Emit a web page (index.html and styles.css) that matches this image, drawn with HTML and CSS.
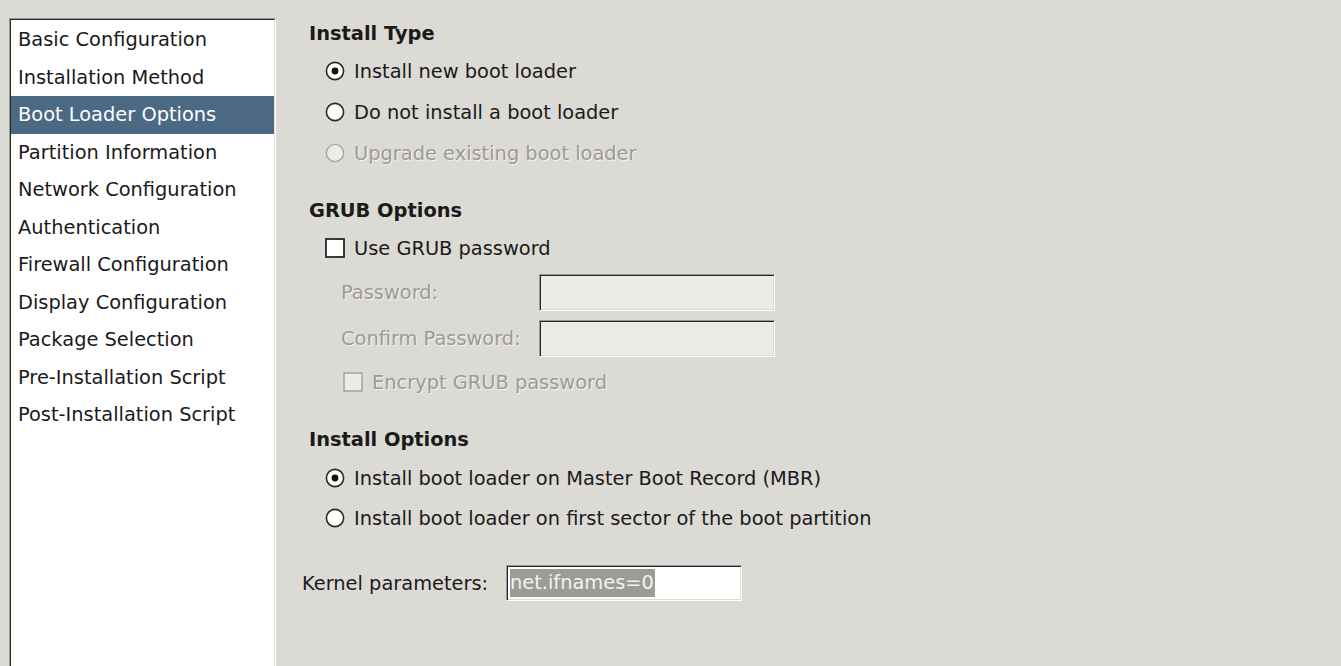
FILE: index.html
```html
<!DOCTYPE html>
<html>
<head>
<meta charset="utf-8">
<link rel="stylesheet" href="styles.css">
</head>
<body>
<div class="window">
  <div class="sidebar">
    <div class="sidebar-inner">
      <div class="item">Basic Configuration</div>
      <div class="item">Installation Method</div>
      <div class="item selected">Boot Loader Options</div>
      <div class="item">Partition Information</div>
      <div class="item">Network Configuration</div>
      <div class="item">Authentication</div>
      <div class="item">Firewall Configuration</div>
      <div class="item">Display Configuration</div>
      <div class="item">Package Selection</div>
      <div class="item">Pre-Installation Script</div>
      <div class="item">Post-Installation Script</div>
    </div>
  </div>

  <div class="main">
    <div class="heading">Install Type</div>
    <div class="row opt first">
      <svg class="radio" width="20" height="20" viewBox="0 0 20 20"><circle cx="10" cy="10" r="8.6" fill="#fff" stroke="#2a2a2a" stroke-width="1.6"/><circle cx="10" cy="10" r="3.4" fill="#111"/></svg>
      <span>Install new boot loader</span>
    </div>
    <div class="row opt">
      <svg class="radio" width="20" height="20" viewBox="0 0 20 20"><circle cx="10" cy="10" r="8.6" fill="#fff" stroke="#2a2a2a" stroke-width="1.6"/></svg>
      <span>Do not install a boot loader</span>
    </div>
    <div class="row opt disabled">
      <svg class="radio" width="20" height="20" viewBox="0 0 20 20"><circle cx="10" cy="10" r="8.6" fill="#edebe6" stroke="#a8a6a1" stroke-width="1.4"/></svg>
      <span>Upgrade existing boot loader</span>
    </div>

    <div class="heading section">GRUB Options</div>
    <div class="row opt first">
      <svg class="check" width="20" height="20" viewBox="0 0 20 20"><rect x="1" y="1" width="18" height="18" fill="#fff" stroke="#262626" stroke-width="1.8"/></svg>
      <span>Use GRUB password</span>
    </div>
    <div class="row field pw-first">
      <span class="field-label disabled">Password:</span>
      <div class="entry entry-disabled"></div>
    </div>
    <div class="row field pw-second">
      <span class="field-label disabled">Confirm Password:</span>
      <div class="entry entry-disabled"></div>
    </div>
    <div class="row opt encrypt disabled">
      <svg class="check" width="20" height="20" viewBox="0 0 20 20"><rect x="1" y="1" width="18" height="18" fill="#edebe6" stroke="#a19f9a" stroke-width="1.4"/></svg>
      <span>Encrypt GRUB password</span>
    </div>

    <div class="heading section">Install Options</div>
    <div class="row opt first mbr">
      <svg class="radio" width="20" height="20" viewBox="0 0 20 20"><circle cx="10" cy="10" r="8.6" fill="#fff" stroke="#2a2a2a" stroke-width="1.6"/><circle cx="10" cy="10" r="3.4" fill="#111"/></svg>
      <span>Install boot loader on Master Boot Record (MBR)</span>
    </div>
    <div class="row opt sector">
      <svg class="radio" width="20" height="20" viewBox="0 0 20 20"><circle cx="10" cy="10" r="8.6" fill="#fff" stroke="#2a2a2a" stroke-width="1.6"/></svg>
      <span>Install boot loader on first sector of the boot partition</span>
    </div>

    <div class="row kernel">
      <span class="kernel-label">Kernel parameters:</span>
      <div class="entry entry-white"><span class="sel">net.ifnames=0</span></div>
    </div>
  </div>
</div>
</body>
</html>
```

FILE: styles.css
```css
html, body {
  margin: 0;
  padding: 0;
}
body {
  background: #dcdad5;
  font-family: "DejaVu Sans", "Liberation Sans", sans-serif;
  font-size: 19.4px;
  color: #1a1a1a;
  height: 666px;
  overflow: hidden;
}
.window {
  display: flex;
  align-items: flex-start;
}
.sidebar {
  margin-left: 9px;
  margin-top: 18px;
  width: 265px;
  height: 647px;
  border: 1px solid;
  border-bottom: none;
  border-color: #9a9893 #ffffff #ffffff #9a9893;
}
.sidebar-inner {
  height: 100%;
  box-sizing: border-box;
  background: #ffffff;
  border: 1px solid;
  border-bottom: none;
  border-color: #2b2b2b #e4e2de #e4e2de #2b2b2b;
  padding-top: 1px;
}
.item {
  height: 37.5px;
  line-height: 37.5px;
  padding-left: 7px;
  white-space: nowrap;
}
.item.selected {
  background: #4b6983;
  color: #ffffff;
}
.main {
  padding-left: 26px;
  padding-top: 22px;
  display: flex;
  flex-direction: column;
}
.heading {
  font-weight: bold;
  height: 24px;
  line-height: 24px;
  margin-left: 7px;
}
.heading.section {
  margin-top: 34px;
}
.row {
  display: flex;
  align-items: center;
  white-space: nowrap;
}
.opt {
  height: 24px;
  margin-left: 23px;
  margin-top: 17px;
  gap: 9px;
}
.opt.first {
  margin-top: 13px;
}
.opt.mbr {
  margin-top: 14px;
}
.opt.sector {
  margin-top: 16px;
}
.radio, .check {
  flex: none;
}
.disabled {
  color: #9c9a95;
  text-shadow: 1px 1px 0 #f4f3f0;
}
.field {
  height: 37px;
  margin-left: 39px;
}
.field.pw-first {
  margin-top: 14px;
}
.field.pw-second {
  margin-top: 9px;
}
.field-label {
  width: 198px;
  flex: none;
}
.entry {
  box-sizing: border-box;
  width: 236px;
  height: 37px;
  border: 1px solid;
  border-color: #9a9893 #ffffff #ffffff #9a9893;
  box-shadow: inset 1px 1px 0 #262626, inset -1px -1px 0 #dcdad5;
}
.entry-disabled {
  background: #edebe6;
}
.opt.encrypt {
  margin-left: 41px;
  margin-top: 13px;
}
.kernel {
  margin-top: 35px;
  height: 36px;
}
.kernel-label {
  width: 204px;
  flex: none;
}
.entry-white {
  height: 36px;
  background: #ffffff;
  padding: 3px 0 0 3px;
  display: flex;
  align-items: flex-start;
}
.sel {
  background: #9d9b96;
  color: #f2f2f2;
  height: 28px;
  line-height: 28px;
  padding-right: 1px;
}
```
